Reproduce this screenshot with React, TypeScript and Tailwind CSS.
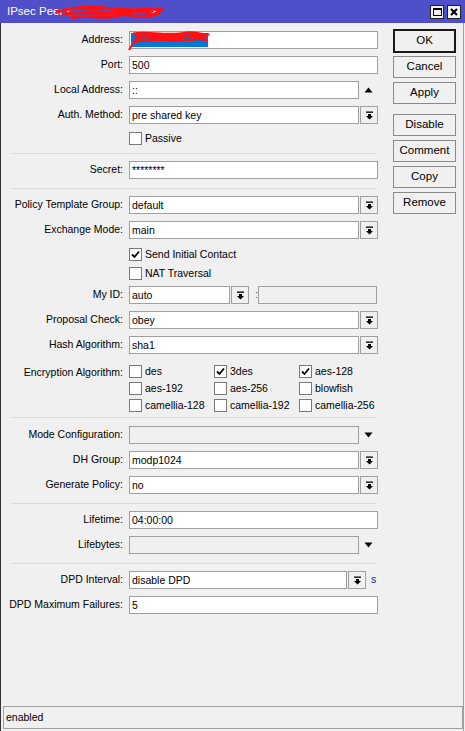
import React from "react";

const FONT = "font-['Liberation_Sans',Arial,sans-serif]";

function DropIcon() {
  return (
    <svg width="9" height="9" viewBox="0 0 9 9">
      <rect x="1" y="0.5" width="7" height="1.3" fill="#000" />
      <polygon points="3,3 6,3 6,5 8,5 4.5,8.5 1,5 3,5" fill="#000" />
    </svg>
  );
}

function Triangle({ up }: { up?: boolean }) {
  return (
    <svg width="9" height="6" viewBox="0 0 9 6">
      <polygon points={up ? "0.5,5.5 8.5,5.5 4.5,0.5" : "0.5,0.5 8.5,0.5 4.5,5.5"} fill="#000" />
    </svg>
  );
}

function Label({ text }: { text: string }) {
  return <div className="w-[123px] shrink-0 text-right whitespace-nowrap">{text}</div>;
}

function Field({
  value,
  width = "w-[249px]",
  grey,
}: {
  value?: string;
  width?: string;
  grey?: boolean;
}) {
  return (
    <div
      className={`${width} h-[18px] shrink-0 border border-[#a0a0a0] px-[2px] leading-[16px] whitespace-nowrap overflow-hidden ${
        grey ? "bg-[#f0f0f0]" : "bg-white"
      }`}
    >
      {value}
    </div>
  );
}

function DropButton({ className = "" }: { className?: string }) {
  return (
    <div
      className={`w-[18px] h-[18px] shrink-0 border border-[#a0a0a0] bg-[#f0f0f0] flex items-center justify-center ${className}`}
    >
      <DropIcon />
    </div>
  );
}

function Row({
  label,
  top,
  children,
}: {
  label: string;
  top: string;
  children: React.ReactNode;
}) {
  return (
    <div className={`flex items-center h-[18px] ${top}`}>
      <Label text={label} />
      <div className="ml-[6px] flex items-center">{children}</div>
    </div>
  );
}

function Check({ checked, label }: { checked?: boolean; label: string }) {
  return (
    <div className="flex items-center h-[13px] whitespace-nowrap">
      <div className="w-[13px] h-[13px] shrink-0 border border-[#7a7a7a] bg-white flex items-center justify-center">
        {checked && (
          <svg width="9" height="9" viewBox="0 0 9 9">
            <path d="M1 4.5 L3.5 7 L8 1.5" stroke="#000" strokeWidth="1.8" fill="none" />
          </svg>
        )}
      </div>
      <span className="ml-[3px]">{label}</span>
    </div>
  );
}

function Separator({ top }: { top: string }) {
  return <div className={`ml-[11px] w-[366px] h-px bg-[#d9d9d9] ${top}`} />;
}

function SideButton({ text, primary, top }: { text: string; primary?: boolean; top: string }) {
  return (
    <div
      className={`w-[63px] flex items-center justify-center text-[11.5px] ${top} ${
        primary
          ? "h-[24px] border-2 border-[#1a1a1a] bg-[#f0f0f0]"
          : "h-[22px] border border-[#8a8a8a] bg-[#f0f0f0]"
      }`}
    >
      {text}
    </div>
  );
}

export default function App() {
  return (
    <div className={`w-[465px] h-[731px] bg-[#f0f0f0] text-[10.5px] text-black ${FONT} flex flex-col overflow-hidden`}>
      {/* title bar */}
      <div className="relative h-[23px] shrink-0 bg-[#4f4fca] flex items-center pl-[7px] text-white text-[11.5px]">
        <span>IPsec Peer &lt;</span>
        <span className="ml-[76px]">&gt;</span>
        <svg className="absolute left-[54px] top-[3px]" width="112" height="20" viewBox="0 0 112 20">
          <path d="M2 9 C20 4 40 3 60 6 C80 8 100 5 110 7" stroke="#ff1010" strokeWidth="3" fill="none" />
          <path d="M8 12 C30 6 50 14 70 9 C85 5 95 14 106 10" stroke="#ff1010" strokeWidth="3" fill="none" />
          <path d="M16 15 C35 10 45 18 62 13 C75 9 88 17 100 12" stroke="#ff1010" strokeWidth="2.5" fill="none" />
          <path d="M26 5 C40 10 52 2 66 8 C78 13 86 3 96 9" stroke="#ff1010" strokeWidth="2.5" fill="none" />
        </svg>
        <div className="ml-auto mr-[4px] flex gap-[3px]">
          <div className="w-[14px] h-[14px] border border-[#222] bg-[#f0f0f0] flex items-center justify-center">
            <div className="w-[9px] h-[8px] border border-black border-t-2" />
          </div>
          <div className="w-[14px] h-[14px] border border-[#222] bg-[#f0f0f0] flex items-center justify-center">
            <svg width="8" height="8" viewBox="0 0 8 8">
              <path d="M1 1 L7 7 M7 1 L1 7" stroke="#000" strokeWidth="2" />
            </svg>
          </div>
        </div>
      </div>

      {/* body */}
      <div className="flex-1 flex border-l border-[#333] border-r border-r-[#a0a0a0] w-[464px]">
        <div className="w-[385px] shrink-0 -ml-px">
          <Row label="Address:" top="mt-[8px]">
            <div className="relative w-[249px] h-[18px] border border-[#a0a0a0] bg-white">
              <div className="absolute left-[1px] top-[1px] w-[77px] h-[14px] bg-[#0078d7]" />
              <svg className="absolute -left-[3px] -top-[4px]" width="86" height="24" viewBox="0 0 86 24">
                <path d="M6 6 C20 3 40 9 60 5 C70 4 78 8 82 6" stroke="#ff1010" strokeWidth="3" fill="none" />
                <path d="M10 10 C25 6 45 13 62 8 C72 6 78 11 80 9" stroke="#ff1010" strokeWidth="3" fill="none" />
                <path d="M8 14 C28 9 48 15 70 11 C76 10 79 13 80 12" stroke="#ff1010" strokeWidth="2.5" fill="none" />
                <path d="M16 8 C30 13 42 5 55 12" stroke="#ff1010" strokeWidth="2.5" fill="none" />
                <path d="M12 6 C9 12 4 18 2 22" stroke="#ff1010" strokeWidth="2" fill="none" />
              </svg>
            </div>
          </Row>
          <Row label="Port:" top="mt-[7px]">
            <Field value="500" />
          </Row>
          <Row label="Local Address:" top="mt-[7px]">
            <Field value="::" width="w-[230px]" />
            <div className="w-[19px] flex justify-center">
              <Triangle up />
            </div>
          </Row>
          <Row label="Auth. Method:" top="mt-[7px]">
            <Field value="pre shared key" width="w-[230px]" />
            <DropButton className="ml-px" />
          </Row>
          <div className="ml-[129px] mt-[8px]">
            <Check label="Passive" />
          </div>
          <Separator top="mt-[8px]" />
          <Row label="Secret:" top="mt-[7px]">
            <Field value="********" />
          </Row>
          <Separator top="mt-[9px]" />
          <Row label="Policy Template Group:" top="mt-[7px]">
            <Field value="default" width="w-[230px]" />
            <DropButton className="ml-px" />
          </Row>
          <Row label="Exchange Mode:" top="mt-[7px]">
            <Field value="main" width="w-[230px]" />
            <DropButton className="ml-px" />
          </Row>
          <div className="ml-[129px] mt-[9px]">
            <Check checked label="Send Initial Contact" />
          </div>
          <div className="ml-[129px] mt-[6px]">
            <Check label="NAT Traversal" />
          </div>
          <Row label="My ID:" top="mt-[6px]">
            <Field value="auto" width="w-[101px]" />
            <DropButton className="ml-px" />
            <span className="ml-[6px] text-[#444]">:</span>
            <Field width="w-[119px]" grey />
          </Row>
          <Row label="Proposal Check:" top="mt-[7px]">
            <Field value="obey" width="w-[230px]" />
            <DropButton className="ml-px" />
          </Row>
          <Row label="Hash Algorithm:" top="mt-[7px]">
            <Field value="sha1" width="w-[230px]" />
            <DropButton className="ml-px" />
          </Row>
          <div className="flex mt-[11px]">
            <Label text="Encryption Algorithm:" />
            <div className="ml-[6px] grid grid-cols-[85px_85px_85px] gap-y-[4px]">
              <Check label="des" />
              <Check checked label="3des" />
              <Check checked label="aes-128" />
              <Check label="aes-192" />
              <Check label="aes-256" />
              <Check label="blowfish" />
              <Check label="camellia-128" />
              <Check label="camellia-192" />
              <Check label="camellia-256" />
            </div>
          </div>
          <Separator top="mt-[5px]" />
          <Row label="Mode Configuration:" top="mt-[8px]">
            <Field width="w-[230px]" grey />
            <div className="w-[19px] flex justify-center">
              <Triangle />
            </div>
          </Row>
          <Row label="DH Group:" top="mt-[7px]">
            <Field value="modp1024" width="w-[230px]" />
            <DropButton className="ml-px" />
          </Row>
          <Row label="Generate Policy:" top="mt-[7px]">
            <Field value="no" width="w-[230px]" />
            <DropButton className="ml-px" />
          </Row>
          <Separator top="mt-[9px]" />
          <Row label="Lifetime:" top="mt-[7px]">
            <Field value="04:00:00" />
          </Row>
          <Row label="Lifebytes:" top="mt-[7px]">
            <Field width="w-[230px]" grey />
            <div className="w-[19px] flex justify-center">
              <Triangle />
            </div>
          </Row>
          <Separator top="mt-[9px]" />
          <Row label="DPD Interval:" top="mt-[7px]">
            <Field value="disable DPD" width="w-[218px]" />
            <DropButton className="ml-px" />
            <span className="ml-[5px] text-[#1a1a8a]">s</span>
          </Row>
          <Row label="DPD Maximum Failures:" top="mt-[7px]">
            <Field value="5" />
          </Row>
        </div>

        <div className="ml-[8px] flex flex-col">
          <SideButton text="OK" primary top="mt-[6px]" />
          <SideButton text="Cancel" top="mt-[3px]" />
          <SideButton text="Apply" top="mt-[4px]" />
          <SideButton text="Disable" top="mt-[10px]" />
          <SideButton text="Comment" top="mt-[4px]" />
          <SideButton text="Copy" top="mt-[4px]" />
          <SideButton text="Remove" top="mt-[4px]" />
        </div>
      </div>

      {/* status bar */}
      <div className="h-[25px] shrink-0 flex border-l border-[#333] border-r border-r-[#a0a0a0] w-[464px] pb-[2px]">
        <div className="ml-[2px] w-[460px] h-[23px] border border-[#a0a0a0] bg-[#f0f0f0] pl-[2px] leading-[21px]">
          enabled
        </div>
      </div>
    </div>
  );
}
